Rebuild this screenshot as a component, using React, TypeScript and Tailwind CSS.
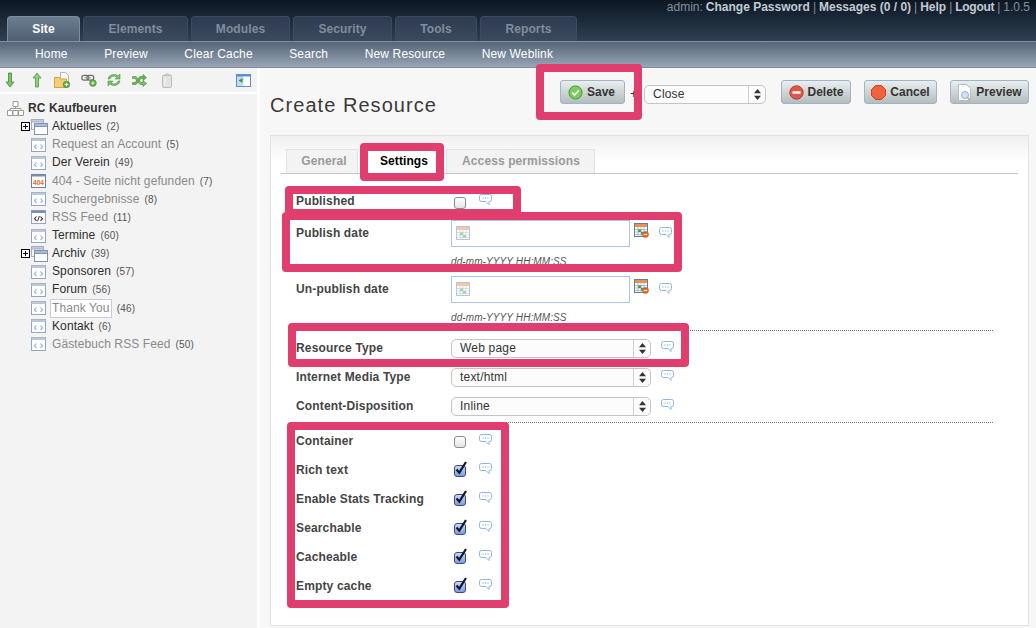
import React from "react";

const FONT = "font-['Liberation_Sans',Arial,sans-serif]";

const TABS = [
  { label: "Site", width: "w-[73px]", active: true },
  { label: "Elements", width: "w-[105px]" },
  { label: "Modules", width: "w-[99px]" },
  { label: "Security", width: "w-[99px]" },
  { label: "Tools", width: "w-[82px]" },
  { label: "Reports", width: "w-[97px]" },
];

const SUBNAV = ["Home", "Preview", "Clear Cache", "Search", "New Resource", "New Weblink"];

type TreeItem = {
  name: string;
  count: number;
  icon?: "page" | "folder" | "404" | "code";
  muted?: boolean;
  boxed?: boolean;
};

const TREE: TreeItem[] = [
  { name: "Aktuelles", count: 2, icon: "folder" },
  { name: "Request an Account", count: 5, muted: true },
  { name: "Der Verein", count: 49 },
  { name: "404 - Seite nicht gefunden", count: 7, icon: "404", muted: true },
  { name: "Suchergebnisse", count: 8, muted: true },
  { name: "RSS Feed", count: 11, icon: "code", muted: true },
  { name: "Termine", count: 60 },
  { name: "Archiv", count: 39, icon: "folder" },
  { name: "Sponsoren", count: 57 },
  { name: "Forum", count: 56 },
  { name: "Thank You", count: 46, muted: true, boxed: true },
  { name: "Kontakt", count: 6 },
  { name: "Gästebuch RSS Feed", count: 50, muted: true },
];

function PageIcon({ kind }: { kind: TreeItem["icon"] }) {
  if (kind === "folder") {
    return (
      <svg width="17" height="16" viewBox="0 0 17 16" className="shrink-0">
        <rect x="0.5" y="0.5" width="12" height="10" fill="#f4f6fa" stroke="#a3aec0" />
        <rect x="0.5" y="0.5" width="12" height="2.5" fill="#c3ccdb" stroke="#a3aec0" />
        <rect x="3.5" y="4.5" width="13" height="11" fill="#fff" stroke="#8494b0" />
        <rect x="3.5" y="4.5" width="13" height="3" fill="#a9bcdc" stroke="#8494b0" />
      </svg>
    );
  }
  if (kind === "404") {
    return (
      <svg width="15" height="14" viewBox="0 0 15 14" className="shrink-0">
        <rect x="0.5" y="0.5" width="14" height="13" fill="#fff" stroke="#6f7f99" />
        <rect x="0.5" y="0.5" width="14" height="2" fill="#7f8fa8" />
        <text x="7.5" y="10.5" textAnchor="middle" fontSize="6.5" fontWeight="700" fill="#d9692a" fontFamily="Liberation Sans">
          404
        </text>
      </svg>
    );
  }
  const color = kind === "code" ? "#333" : "#8fb0dd";
  return (
    <svg width="15" height="14" viewBox="0 0 15 14" className="shrink-0">
      <rect x="0.5" y="0.5" width="14" height="13" fill="#fdfeff" stroke="#94a5bd" />
      <rect x="0.5" y="0.5" width="14" height="2.5" fill={kind === "code" ? "#7f8fa8" : "#bcc7d8"} />
      <path d="M5.5 6.5 3.5 8.7l2 2.1M9.5 6.5l2 2.2-2 2.1" fill="none" stroke={color} strokeWidth="1.1" />
      {kind === "code" && <path d="M8.4 6 6.6 11.2" stroke={color} strokeWidth="1" />}
    </svg>
  );
}

function TreeRow({ item }: { item: TreeItem }) {
  return (
    <div className="flex h-[18.17px] items-center">
      <div className="flex w-[10px] justify-start">
        {item.icon === "folder" && (
          <span className="relative block h-[9px] w-[9px] border border-black bg-white">
            <span className="absolute left-[1px] top-[3px] h-px w-[5px] bg-black" />
            <span className="absolute left-[3px] top-[1px] h-[5px] w-px bg-black" />
          </span>
        )}
      </div>
      <div className="w-[21px]">
        <PageIcon kind={item.icon} />
      </div>
      <span
        className={`text-[12px] leading-[17px] tracking-[0.1px] ${item.muted ? "text-[#8a8a8a]" : "text-[#2e2e2e]"} ${
          item.boxed ? "-ml-[2px] border border-[#c9cbdc] bg-white px-[1px]" : ""
        }`}
      >
        {item.name}
      </span>
      <span className="ml-[5px] text-[10px] tracking-[0.2px] text-[#555]">({item.count})</span>
    </div>
  );
}

function ToolbarIcons() {
  return (
    <div className="flex h-[24px] items-center bg-[#f3f3f3] pl-[5px]">
      <svg width="10" height="16" viewBox="0 0 10 16">
        <path d="M3.5 1h3v9H9l-4 5-4-5h2.5z" fill="#7cc36a" stroke="#3f8a35" strokeWidth="0.8" />
      </svg>
      <svg width="10" height="16" viewBox="0 0 10 16" className="ml-[17px]">
        <path d="M3.5 15h3V6H9L5 1 1 6h2.5z" fill="#8ed07c" stroke="#4b9a40" strokeWidth="0.8" />
      </svg>
      <svg width="16" height="16" viewBox="0 0 16 16" className="ml-[12px]">
        <path d="M6.5.5h5l3 3v9h-8z" fill="#fbfbfb" stroke="#b5b5b5" />
        <path d="M.5 5.5h5l1 1.500h6v8.500h-12z" fill="#f5cf77" stroke="#d9a13a" />
        <circle cx="12.500" cy="12.500" r="3.300" fill="#5fae4a" stroke="#3f8a35" strokeWidth="0.6" />
        <path d="M10.800 12.500h3.400M12.500 10.800v3.400" stroke="#fff" strokeWidth="1" />
      </svg>
      <svg width="17" height="15" viewBox="0 0 20 17" className="ml-[11px]">
        <rect x="1" y="2.500" width="8" height="5.500" rx="2.500" fill="none" stroke="#6e6e6e" strokeWidth="1.500" />
        <rect x="7" y="2.500" width="8" height="5.500" rx="2.500" fill="none" stroke="#6e6e6e" strokeWidth="1.500" />
        <path d="M4 5.200h8" stroke="#999" strokeWidth="1.200" />
        <circle cx="14" cy="11.500" r="4" fill="#5fae4a" stroke="#3f8a35" strokeWidth="0.6" />
        <path d="M12 11.500h4M14 9.500v4" stroke="#fff" strokeWidth="1" />
      </svg>
      <svg width="16" height="16" viewBox="0 0 16 16" className="ml-[8px]">
        <path d="M2 7a6 5 0 0 1 10-3.200L14 2v5H9l1.800-1.800A4 3.500 0 0 0 4 7z" fill="#7fc06e" stroke="#4b9a40" strokeWidth="0.6" />
        <path d="M14 9a6 5 0 0 1-10 3.200L2 14V9h5l-1.800 1.800A4 3.500 0 0 0 12 9z" fill="#7fc06e" stroke="#4b9a40" strokeWidth="0.6" />
      </svg>
      <svg width="15" height="13" viewBox="0 0 15 13" className="ml-[10px]">
        <path d="M.5 2.500h3.500l5 6h2V6.500l3.500 3-3.500 3v-2H8l-5-6H.5z" fill="#7fc06e" stroke="#3f8a35" strokeWidth="0.6" />
        <path d="M.5 10.500h3.500l5-6h2v2l3.500-3-3.500-3v2H8l-5 6H.5z" fill="#6bb35a" stroke="#3f8a35" strokeWidth="0.6" />
      </svg>
      <svg width="10" height="15" viewBox="0 0 10 15" className="ml-[15px]">
        <rect x="0.500" y="2" width="9" height="12.500" rx="1.500" fill="#e3e3e3" stroke="#bdbdbd" />
        <path d="M1 2.500h8M3.500 1h3" stroke="#bdbdbd" />
        <path d="M3 5v7" stroke="#f5f5f5" />
      </svg>
      <svg width="15" height="13" viewBox="0 0 15 13" className="ml-[64px]">
        <rect x="0.500" y="0.500" width="14" height="12" fill="#fff" stroke="#5d8fd0" />
        <rect x="1" y="1" width="6.500" height="11" fill="#c3dcf6" />
        <rect x="1" y="1" width="13" height="1.500" fill="#5d8fd0" />
        <path d="M6.500 4v5L2.500 6.500z" fill="#3f9a35" />
      </svg>
    </div>
  );
}

function Sidebar() {
  return (
    <aside className="w-[257px] shrink-0 bg-[#f3f3f3]">
      <ToolbarIcons />
      <div className="h-[2px] bg-white" />
      <div className="pl-[7px] pt-[5px]">
        <div className="flex h-[18px] items-center">
          <svg width="17" height="15" viewBox="0 0 17 15" className="shrink-0">
            <path d="M6 .5h5v5H6zM8.500 5.500v2M3 9.500v-2h11v2" fill="#fff" stroke="#9a9a9a" />
            <path d="M.5 9.500h5v5h-5zM6 9.500h5v5H6zM11.500 9.500h5v5h-5z" fill="#fff" stroke="#9a9a9a" />
          </svg>
          <span className="ml-[4px] text-[12px] font-bold tracking-[0.1px] text-[#333]">RC Kaufbeuren</span>
        </div>
        <div className="pl-[14px] pt-[0.5px]">
          {TREE.map((item) => (
            <TreeRow key={item.name} item={item} />
          ))}
        </div>
      </div>
    </aside>
  );
}

function ActionButton({ label, icon, width }: { label: string; icon: React.ReactNode; width: string }) {
  return (
    <button
      className={`flex h-[24px] ${width} items-center justify-center gap-[4px] rounded-[3px] border border-[#9fb3cc] bg-gradient-to-b from-[#e9eeee] to-[#b6bdbd] text-[12px] font-bold text-[#333]`}
    >
      {icon}
      {label}
    </button>
  );
}

function Bubble() {
  return (
    <svg width="13" height="12" viewBox="0 0 13 12" className="shrink-0">
      <path
        d="M2.500.5h8a2 2 0 0 1 2 2v3a2 2 0 0 1-2 2h-.500v3l-3-3h-4.500a2 2 0 0 1-2-2v-3a2 2 0 0 1 2-2z"
        fill="#fff"
        stroke="#8db6e4"
      />
      <path d="M3.500 4h1M6 4h1M8.500 4h1" stroke="#6f9cd4" />
    </svg>
  );
}

function Checkbox({ checked }: { checked?: boolean }) {
  if (!checked) {
    return (
      <span className="mt-[3px] block h-[12px] w-[12px] rounded-[3px] border border-[#8c8c8c] bg-gradient-to-b from-white to-[#e4e4e4]" />
    );
  }
  return (
    <span className="relative mt-[3px] block h-[12px] w-[12px] rounded-[3px] border border-[#3e4a7c] bg-gradient-to-b from-[#c6d8f8] to-[#7f9de0]">
      <svg width="14" height="15" viewBox="0 0 14 15" className="absolute -top-[5px] left-0">
        <path d="M1.500 8.500l2.800 3.200L11 1" fill="none" stroke="#10182c" strokeWidth="2.200" />
      </svg>
    </span>
  );
}

function CheckRow({ label, checked, className = "" }: { label: string; checked?: boolean; className?: string }) {
  return (
    <div className={`flex items-center ${className}`}>
      <label className="w-[158px] text-[12px] font-bold tracking-[0.15px] text-[#444]">{label}</label>
      <Checkbox checked={checked} />
      <span className="ml-[13px] -mt-[2px]">
        <Bubble />
      </span>
    </div>
  );
}

function CalendarIcon({ small }: { small?: boolean }) {
  return (
    <svg width="15" height="15" viewBox="0 0 15 15" className="shrink-0">
      <rect x="0.500" y="0.500" width="13" height="13" fill="#fff" stroke={small ? "#b7c6d8" : "#5f7ea8"} />
      <rect x="1" y="1" width="12" height="3" fill={small ? "#f3c9a3" : "#e9924d"} />
      <path d="M1 6.500h12M1 9h12M1 11.500h12M4 4v9M7 4v9M10 4v9" stroke={small ? "#c3d3e6" : "#8ea6c6"} strokeWidth="0.7" />
      <rect x="4" y="6.500" width="3" height="2.500" fill={small ? "#a9cf9d" : "#4f9f42"} />
      <rect x="7" y="9" width="3" height="2.500" fill={small ? "#a9cf9d" : "#4f9f42"} />
      {!small && (
        <>
          <circle cx="11.500" cy="11.500" r="3.300" fill="#dd6420" />
          <path d="M9.700 11.500h3.600" stroke="#fff" strokeWidth="1.200" />
        </>
      )}
    </svg>
  );
}

function DateRow({ label, className = "" }: { label: string; className?: string }) {
  return (
    <div className={`flex h-[56px] items-start ${className}`}>
      <label className="mt-[4px] w-[155px] text-[12px] font-bold tracking-[0.15px] text-[#444]">{label}</label>
      <div>
        <div className="flex items-start">
          <div className="flex h-[27px] w-[179px] items-center border border-[#a9c4e4] bg-white pl-[4px]">
            <CalendarIcon small />
          </div>
          <span className="ml-[4px] mt-[3px]">
            <CalendarIcon />
          </span>
          <span className="ml-[10px] mt-[7px]">
            <Bubble />
          </span>
        </div>
        <div className="mt-[7px] text-[10px] italic tracking-[0.1px] text-[#555]">dd-mm-YYYY HH:MM:SS</div>
      </div>
    </div>
  );
}

function UpDown() {
  return (
    <svg width="7" height="11" viewBox="0 0 7 11">
      <path d="M3.500 0 7 4.200H0zM3.500 11 0 6.800h7z" fill="#333" />
    </svg>
  );
}

function SelectBox({ value, width, textWidth }: { value: string; width: string; textWidth: string }) {
  return (
    <div className={`flex h-[19px] ${width} items-center rounded-[5px] border border-[#c4c4c4] bg-[#fcfcfc]`}>
      <span className={`${textWidth} pb-[1px] pl-[8px] text-[12px] tracking-[0.2px] text-[#333]`}>{value}</span>
      <span className="flex h-full flex-1 items-center justify-center border-l border-[#d0d0d0]">
        <UpDown />
      </span>
    </div>
  );
}

function SelectRow({ label, value, className = "" }: { label: string; value: string; className?: string }) {
  return (
    <div className={`flex h-[19px] items-center ${className}`}>
      <label className="w-[155px] pb-[1px] text-[12px] font-bold tracking-[0.15px] text-[#444]">{label}</label>
      <SelectBox value={value} width="w-[200px]" textWidth="w-[181px]" />
      <span className="ml-[10px] -mt-[3px]">
        <Bubble />
      </span>
    </div>
  );
}

function Dotted({ className = "" }: { className?: string }) {
  return <div className={`w-[697px] border-t border-dotted border-[#777] ${className}`} />;
}

function Panel() {
  return (
    <section className="h-[491px] w-[759px] border border-[#e2e2e2] bg-gradient-to-b from-[#f0f0f0] to-white to-[26px] px-[10px] pt-[13px]">
      <div className="flex h-[25px] gap-[10px] border-b border-[#c8c8c8] pl-[5px] text-[12px] font-bold tracking-[0.1px]">
        <span className="flex h-[24px] w-[72px] items-center justify-center border border-b-0 border-[#e2e2e2] bg-[#f3f3f3] pb-[2px] pl-[4px] text-[#9a9a9a]">
          General
        </span>
        <span className="flex h-[25px] w-[68px] items-center justify-center bg-white pb-[2px] pl-[4px] text-black">Settings</span>
        <span className="flex h-[24px] w-[149px] items-center justify-center border border-b-0 border-[#e2e2e2] bg-[#f3f3f3] pb-[2px] pl-[1px] text-[#9a9a9a]">
          Access permissions
        </span>
      </div>
      <div className="pl-[15px]">
        <CheckRow label="Published" className="mt-[17px] h-[20px]" />
        <DateRow label="Publish date" className="mt-[9px]" />
        <DateRow label="Un-publish date" />
        <Dotted className="-mt-[2px]" />
        <SelectRow label="Resource Type" value="Web page" className="mt-[8px]" />
        <SelectRow label="Internet Media Type" value="text/html" className="mt-[10px]" />
        <SelectRow label="Content-Disposition" value="Inline" className="mt-[10px]" />
        <Dotted className="mt-[6px]" />
        <div className="mt-[3px]">
          <CheckRow label="Container" className="h-[29px]" />
          <CheckRow label="Rich text" checked className="h-[29px]" />
          <CheckRow label="Enable Stats Tracking" checked className="h-[29px]" />
          <CheckRow label="Searchable" checked className="h-[29px]" />
          <CheckRow label="Cacheable" checked className="h-[29px]" />
          <CheckRow label="Empty cache" checked className="h-[29px]" />
        </div>
      </div>
    </section>
  );
}

function MainArea() {
  return (
    <main className="flex-1 border-l-[3px] border-white bg-[#f7f7f7] pl-[10px]">
      <div className="flex h-[67px] items-start">
        <h1 className="mt-[25px] w-[290px] text-[20px] font-normal leading-[24px] tracking-[1.05px] text-[#3a3a3a]">
          Create Resource
        </h1>
        <div className="mt-[12px]">
          <ActionButton
            label="Save"
            width="w-[65px]"
            icon={
              <svg width="15" height="15" viewBox="0 0 16 16" className="-ml-[2px]">
                <circle cx="8" cy="8" r="7" fill="#7ccb5f" stroke="#3f9a35" />
                <path d="M4.500 8.200l2.500 2.500 4.500-5" fill="none" stroke="#fff" strokeWidth="1.800" />
              </svg>
            }
          />
        </div>
        <span className="ml-[5px] mt-[18px] text-[12px] leading-[16px] text-[#333]">+</span>
        <div className="ml-[7px] mt-[17px]">
          <SelectBox value="Close" width="w-[122px]" textWidth="w-[103px]" />
        </div>
        <div className="ml-[15px] mt-[12px]">
          <ActionButton
            label="Delete"
            width="w-[70px]"
            icon={
              <svg width="15" height="15" viewBox="0 0 15 15">
                <circle cx="7.500" cy="7.500" r="6.700" fill="#e2574c" stroke="#b23b32" />
                <rect x="3.500" y="6.300" width="8" height="2.400" fill="#fff" />
              </svg>
            }
          />
        </div>
        <div className="ml-[13px] mt-[12px]">
          <ActionButton
            label="Cancel"
            width="w-[73px]"
            icon={
              <svg width="15" height="15" viewBox="0 0 15 15">
                <path d="M4.500.5h6l4 4v6l-4 4h-6l-4-4v-6z" fill="#f0613c" stroke="#c9452a" />
              </svg>
            }
          />
        </div>
        <div className="ml-[13px] mt-[12px]">
          <ActionButton
            label="Preview"
            width="w-[79px]"
            icon={
              <svg width="15" height="17" viewBox="0 0 15 17">
                <path d="M1.500.5h8l4 4v12h-12z" fill="#fff" stroke="#b5bcc8" />
                <circle cx="8" cy="11" r="3.500" fill="#cfe2f6" stroke="#8fb0d6" />
                <path d="M10.500 13.500l2.500 2.500" stroke="#d69a3a" strokeWidth="1.500" />
              </svg>
            }
          />
        </div>
      </div>
      <Panel />
    </main>
  );
}

// pink annotation boxes drawn on top of the screenshot
function Highlights() {
  const box = "pointer-events-none absolute rounded-[4px] border-8 border-[#df3e6f]";
  return (
    <>
      <div className={`${box} left-[536px] top-[64px] h-[56px] w-[106px]`} />
      <div className={`${box} left-[360px] top-[143px] h-[38px] w-[84px]`} />
      <div className={`${box} left-[285px] top-[186px] h-[31px] w-[236px]`} />
      <div className={`${box} left-[282px] top-[212px] h-[60px] w-[400px]`} />
      <div className={`${box} left-[288px] top-[323px] h-[44px] w-[401px]`} />
      <div className={`${box} left-[287px] top-[422px] h-[186px] w-[222px]`} />
    </>
  );
}

function Sep() {
  return <span className="mx-[3px]">|</span>;
}

export default function App() {
  return (
    <div className={`relative h-[628px] w-[1036px] overflow-hidden bg-[#f7f7f7] ${FONT}`}>
      <header className="h-[41px] bg-gradient-to-b from-[#0d1724] to-[#2f4053] pl-[7px]">
        <div className="flex h-[16px] items-center justify-end pb-[3px] pr-[6px] text-[12px] text-[#848f9c]">
          <span className="mr-[3px]">admin:</span>
          <b className="text-[#c3cad2]">Change Password</b>
          <Sep />
          <b className="text-[#c3cad2]">Messages (0 / 0)</b>
          <Sep />
          <b className="text-[#c3cad2]">Help</b>
          <Sep />
          <b className="tracking-[-0.3px] text-[#c3cad2]">Logout</b>
          <Sep />
          <span>1.0.5</span>
        </div>
        <nav className="flex h-[25px] gap-[3px]">
          {TABS.map((tab) => (
            <span
              key={tab.label}
              className={`flex h-[25px] ${tab.width} items-center justify-center rounded-t-[4px] border border-b-0 text-[12px] font-bold tracking-[0.1px] ${
                tab.active
                  ? "border-[#7d8b9b] bg-gradient-to-b from-[#6d7d90] to-[#4f6075] text-white"
                  : "border-[#3c4b60] bg-gradient-to-b from-[#2e3b50] to-[#3c4a60] text-[#818c9c]"
              }`}
            >
              {tab.label}
            </span>
          ))}
        </nav>
      </header>
      <div className="flex h-[27px] items-center gap-[36.5px] border-y border-t-[#8494a6] border-b-[#7f8da0] bg-gradient-to-b from-[#566579] to-[#98a5b5] pb-[1px] pl-[35px] text-[12px] tracking-[0.15px] text-white">
        {SUBNAV.map((item) => (
          <span key={item}>{item}</span>
        ))}
      </div>
      <div className="flex h-[560px]">
        <Sidebar />
        <MainArea />
      </div>
      <Highlights />
    </div>
  );
}
